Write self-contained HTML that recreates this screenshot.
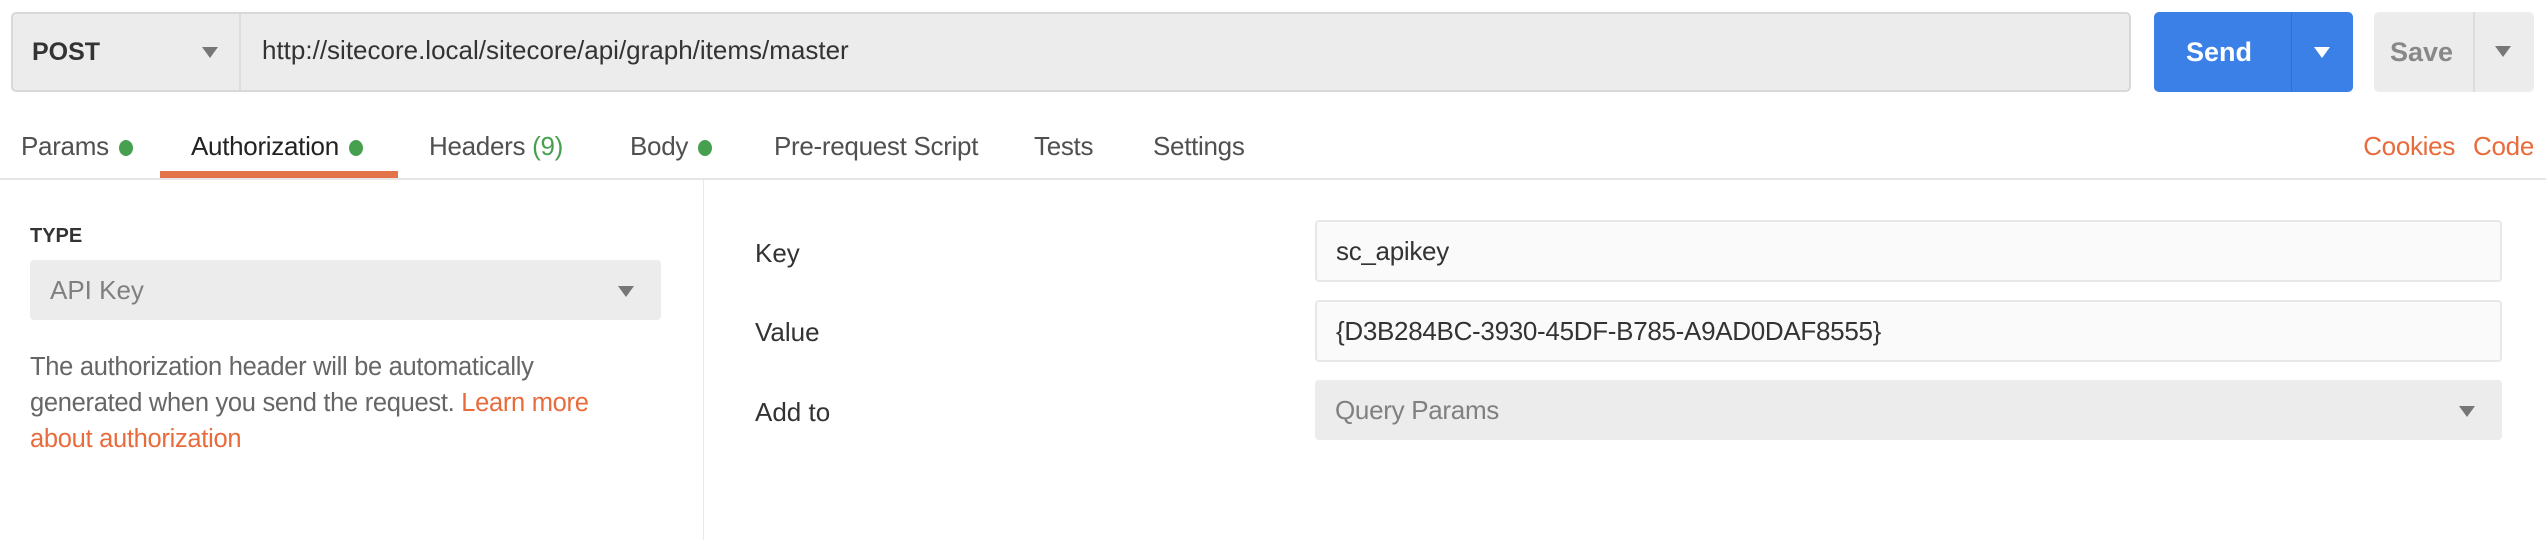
<!DOCTYPE html>
<html><head><meta charset="utf-8"><style>
*{box-sizing:border-box;margin:0;padding:0}
body{width:2546px;height:540px;background:#fff;font-family:"Liberation Sans",sans-serif;color:#333;position:relative;overflow:hidden}
.a{position:absolute}
.tri{position:absolute;width:0;height:0;border-left:8px solid transparent;border-right:8px solid transparent;border-top:11px solid #777}
.t{position:absolute;top:130px;font-size:26px;color:#505050;line-height:32px;white-space:nowrap;letter-spacing:-0.3px}
.dot{display:inline-block;width:14px;height:16px;border-radius:50%;background:#47a04f;margin-left:10px;vertical-align:-1px}
.lbl{position:absolute;left:755px;font-size:26px;color:#333;line-height:32px}
.inp{position:absolute;left:1315px;width:1187px;height:62px;background:#fafafa;border:2px solid #e8e8e8;border-radius:4px;font-size:26px;line-height:58px;padding-left:19px;color:#333;letter-spacing:-0.3px}
</style></head><body>
<div class="a" style="left:11px;top:12px;width:2120px;height:80px;background:#ececec;border:2px solid #d8d8d8;border-radius:5px"></div>
<div class="a" style="left:239px;top:14px;width:2px;height:76px;background:#dcdcdc"></div>
<div class="a" style="left:32px;top:36px;font-size:25px;font-weight:bold;color:#333;line-height:32px">POST</div>
<div class="tri" style="left:202px;top:47px"></div>
<div class="a" style="left:262px;top:34px;font-size:26px;color:#333;line-height:32px">http://sitecore.local/sitecore/api/graph/items/master</div>
<div class="a" style="left:2154px;top:12px;width:199px;height:80px;background:#3b80e6;border-radius:5px"></div>
<div class="a" style="left:2291px;top:12px;width:1px;height:80px;background:#2f6fcf"></div>
<div class="a" style="left:2186px;top:36px;font-size:27px;font-weight:bold;color:#fff;line-height:32px">Send</div>
<div class="tri" style="left:2314px;top:47px;border-top-color:#fff"></div>
<div class="a" style="left:2374px;top:12px;width:160px;height:80px;background:#ececec;border-radius:5px"></div>
<div class="a" style="left:2473px;top:12px;width:2px;height:80px;background:#dcdcdc"></div>
<div class="a" style="left:2390px;top:36px;font-size:27px;font-weight:bold;color:#888;line-height:32px">Save</div>
<div class="tri" style="left:2495px;top:46px"></div>

<div class="t" style="left:21px">Params<span class="dot"></span></div>
<div class="t" style="left:191px;color:#222">Authorization<span class="dot"></span></div>
<div class="t" style="left:429px">Headers <span style="color:#47a04f">(9)</span></div>
<div class="t" style="left:630px">Body<span class="dot"></span></div>
<div class="t" style="left:774px">Pre-request Script</div>
<div class="t" style="left:1034px">Tests</div>
<div class="t" style="left:1153px">Settings</div>
<div class="t" style="left:auto;right:12px;color:#e86b3c">Cookies<span style="display:inline-block;width:18px"></span>Code</div>
<div class="a" style="left:160px;top:171px;width:238px;height:7px;background:#e3744a"></div>
<div class="a" style="left:0;top:178px;width:2546px;height:2px;background:#e6e6e6"></div>
<div class="a" style="left:703px;top:180px;width:1px;height:360px;background:#e8e8e8"></div>

<div class="a" style="left:30px;top:223px;font-size:20px;font-weight:bold;color:#333;line-height:26px">TYPE</div>
<div class="a" style="left:30px;top:260px;width:631px;height:60px;background:#ececec;border-radius:4px;font-size:26px;color:#808080;line-height:60px;padding-left:20px">API Key</div>
<div class="tri" style="left:618px;top:286px"></div>
<div class="a" style="left:30px;top:349px;font-size:25.5px;color:#666;line-height:36px;width:680px;letter-spacing:-0.3px">The authorization header will be automatically<br>generated when you send the request. <span style="color:#e86b3c">Learn more<br>about authorization</span></div>

<div class="lbl" style="top:237px">Key</div>
<div class="lbl" style="top:316px">Value</div>
<div class="lbl" style="top:396px">Add to</div>
<div class="inp" style="top:220px">sc_apikey</div>
<div class="inp" style="top:300px">{D3B284BC-3930-45DF-B785-A9AD0DAF8555}</div>
<div class="inp" style="top:380px;height:60px;background:#ececec;border:none;line-height:60px;padding-left:20px;color:#808080">Query Params</div>
<div class="tri" style="left:2459px;top:406px"></div>
</body></html>
